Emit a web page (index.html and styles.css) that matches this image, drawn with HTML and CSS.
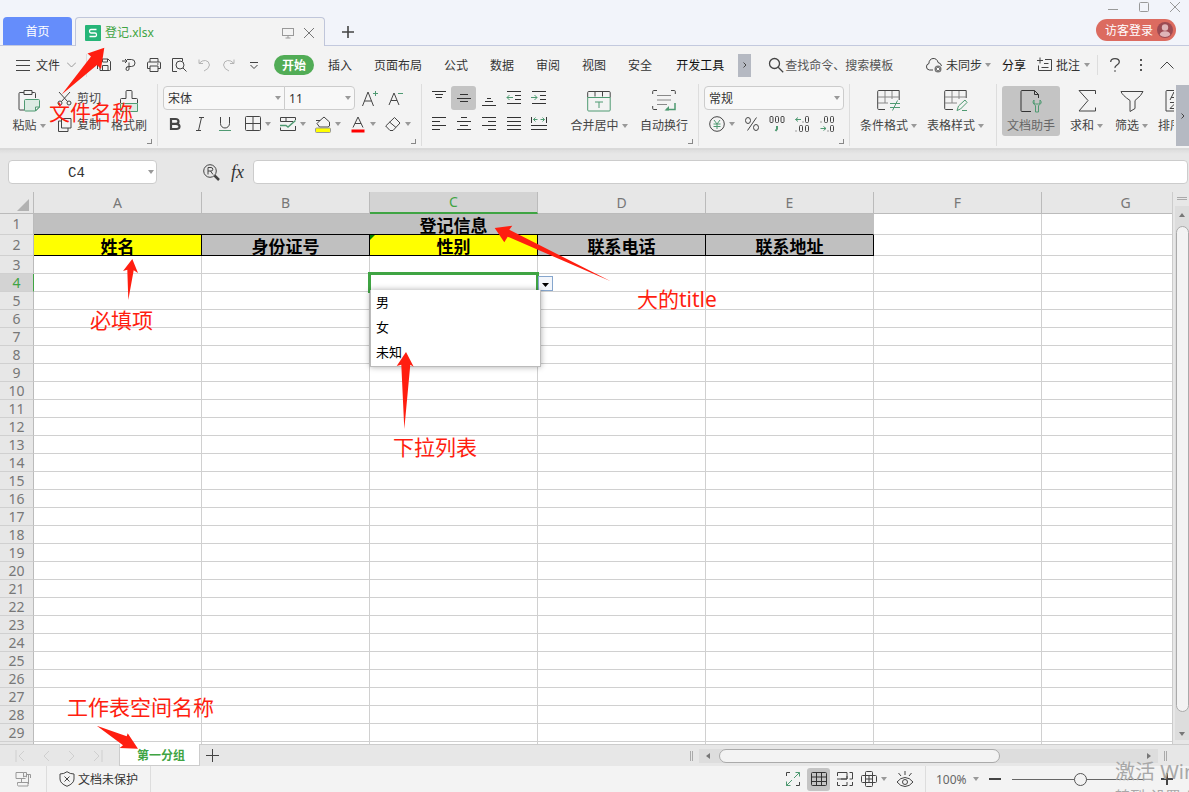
FILE: index.html
```html
<!DOCTYPE html>
<html lang="zh-CN">
<head>
<meta charset="utf-8">
<title>登记.xlsx</title>
<link rel="stylesheet" href="styles.css">
</head>
<body>
<div class="app">
  <header class="titlebar">
    <button class="home-tab">首页</button>
    <div class="file-tab">
      <svg class="file-logo" width="16" height="16" viewBox="0 0 16 16"><rect width="16" height="16" rx="1" fill="#26b578"/><path d="M11.5 4.5H6Q4.500 4.500 4.500 6.200Q4.500 8 6 8h4q1.500 0 1.500 1.800T10 11.500H4.500" fill="none" stroke="#fff" stroke-width="1.300"/></svg>
      <span class="file-name">登记.xlsx</span>
      <button class="plain" aria-label="窗口"><svg width="12" height="12" viewBox="0 0 12 12" class="ic faint"><rect x=".5" y="1.500" width="11" height="7"/><path d="M6 8.500v2.500M3.500 11h5"/></svg></button>
      <button class="plain" aria-label="关闭标签"><svg width="12" height="12" viewBox="0 0 12 12" class="ic mid"><path d="M1 1l10 10M11 1L1 11"/></svg></button>
    </div>
    <button class="plain new-tab" aria-label="新建"><svg width="12" height="12" viewBox="0 0 12 12" class="ic" stroke-width="1.600"><path d="M6 0v12M0 6h12"/></svg></button>
    <div class="window-side">
      <div class="window-controls">
        <button class="plain" aria-label="最小化"><svg width="12" height="12" viewBox="0 0 12 12" class="ic faint"><path d="M1 9.500h10"/></svg></button>
        <button class="plain" aria-label="最大化"><svg width="12" height="12" viewBox="0 0 12 12" class="ic faint"><rect x="1.500" y="2.500" width="9" height="9" rx="1"/></svg></button>
        <button class="plain" aria-label="关闭"><svg width="12" height="12" viewBox="0 0 12 12" class="ic faint"><path d="M1 2l10 10M11 2L1 12"/></svg></button>
      </div>
      <button class="login"><span>访客登录</span><svg width="16" height="16" viewBox="0 0 16 16"><circle cx="8" cy="8" r="8" fill="#9c4a52"/><circle cx="8" cy="5.500" r="3.200" fill="#dfb4b8"/><path d="M2.800 13Q3 9.300 8 9.300T13.200 13Q11 15 8 15T2.800 13" fill="#dfb4b8"/></svg></button>
    </div>
  </header>

  <nav class="menubar">
    <button class="plain file-menu"><svg width="14" height="12" viewBox="0 0 14 12" class="ic"><path d="M0 1.500h14M0 6.500h14M0 11.500h14"/></svg><span>文件</span><svg width="9" height="6" viewBox="0 0 9 6" class="ic faint"><path d="M0 .5l4.500 4.500L9 .5"/></svg></button>
    <div class="quick">
      <button class="plain" aria-label="保存"><svg width="16" height="16" viewBox="0 0 16 16" class="ic"><path d="M1.500 12V3.500q0-1 1-1M4 13.500V3q0-1 1-1h7l2.500 2.500V13q0 .5-1 .5H4M6.500 2v3h5V2M6.500 13.500v-5h5.500v5"/></svg></button>
      <button class="plain" aria-label="输出"><svg width="16" height="16" viewBox="0 0 16 16" class="ic"><path d="M1 4h5M4 2l2 2-2 2M6 2.500h4.500a3.500 3.500 0 0 1 0 7H8l-3 1M8 5.500V12a1.500 1.500 0 0 1-3 0q0-1.500 1.500-2.500"/></svg></button>
      <button class="plain" aria-label="打印"><svg width="16" height="16" viewBox="0 0 16 16" class="ic"><path d="M4 5V1.500h8V5M4 11.500H1.500V6q0-1 1-1h11q1 0 1 1v5.500H12M4 9h8v5.500H4zM11 7h1.500"/></svg></button>
      <button class="plain" aria-label="打印预览"><svg width="16" height="16" viewBox="0 0 16 16" class="ic"><path d="M6 14.500H1.500v-13h10V4"/><circle cx="9" cy="8" r="4"/><path d="M12 11l3.500 3.500"/></svg></button>
      <button class="plain" aria-label="撤销"><svg width="16" height="16" viewBox="0 0 16 16" class="ic pale"><path d="M3 2.500v4h4M3 6.500Q6 3 9.500 3.500T13.500 8Q13 12 8 14"/></svg></button>
      <button class="plain" aria-label="恢复"><svg width="16" height="16" viewBox="0 0 16 16" class="ic pale"><path d="M13 2.500v4H9M13 6.500Q10 3 6.500 3.500T2.500 8Q3 12 8 14"/></svg></button>
      <button class="plain" aria-label="更多"><svg width="16" height="16" viewBox="0 0 16 16" class="ic"><path d="M4 5.500h8M4.500 8L8 11.500 11.500 8"/></svg></button>
    </div>
    <div class="tabs">
      <button class="tab active">开始</button><button class="tab">插入</button><button class="tab">页面布局</button><button class="tab">公式</button><button class="tab">数据</button><button class="tab">审阅</button><button class="tab">视图</button><button class="tab">安全</button><button class="tab dev">开发工具</button>
    </div>
    <button class="plain tab-scroll" aria-label="更多选项卡"><svg width="4" height="6" viewBox="0 0 4 6" class="ic"><path d="M.5 .5L3 3 .5 5.500"/></svg></button>
    <label class="search"><svg width="16" height="16" viewBox="0 0 16 16" class="ic" stroke-width="1.300"><circle cx="6.500" cy="6.500" r="5"/><path d="M10.200 10.200l5 5"/></svg><input type="text" placeholder="查找命令、搜索模板" aria-label="查找命令"></label>
    <div class="menu-right">
      <button class="plain sync"><svg width="18" height="16" viewBox="0 0 18 16" class="ic"><path d="M8 13H4.500A3.300 3.300 0 0 1 4 6.500 4.500 4.500 0 0 1 13 5.500q3 .5 3.500 3.500"/><circle cx="13" cy="12" r="3.500" fill="#777" stroke="none"/><path d="M11.700 10.700l2.600 2.600M14.300 10.700l-2.600 2.600" stroke="#fff"/></svg><span>未同步</span><i class="caret"></i></button>
      <button class="plain share"><span>分享</span></button>
      <button class="plain note"><svg width="16" height="16" viewBox="0 0 16 16" class="ic"><path d="M0 3.500h6M3 .5v6M8 2.500h6.500v11h-13V8.500M7 6.500h4.500M4.500 10.500h7"/></svg><span>批注</span><i class="caret"></i></button>
      <button class="plain help" aria-label="帮助"><svg width="10" height="14" viewBox="0 0 10 14" class="ic" stroke-width="1.300"><path d="M.7 4Q.7.700 5 .7T9.300 4Q9.300 5.500 7 7T5 10M5 12.200v1.500"/></svg></button>
      <button class="plain more" aria-label="菜单"><svg width="4" height="14" viewBox="0 0 4 14" fill="#555"><rect x="1" y="1" width="2" height="2"/><rect x="1" y="6" width="2" height="2"/><rect x="1" y="11" width="2" height="2"/></svg></button>
      <button class="plain" aria-label="折叠功能区"><svg width="14" height="8" viewBox="0 0 14 8" class="ic"><path d="M.5 7.500L7 1l6.500 6.500"/></svg></button>
    </div>
  </nav>

  <div class="ribbon">
    <section class="group g-clip">
      <button class="big paste"><svg width="24" height="24" viewBox="0 0 24 24" class="ic"><path d="M7 3.500H3q-1 0-1 1V20q0 1 1 1h4M15 3.500h2.500q1 0 1 1V9M7 1.500h8v4H7z"/><path class="g" d="M8.500 10.500h13q1 0 1 1V18l-4 4h-10q-1 0-1-1v-9.500q0-1 1-1M22.500 18h-4v4z" fill="#dcebe3"/></svg><span>粘贴<i class="caret"></i></span></button>
      <div class="small-col">
        <button class="plain"><svg width="15" height="15" viewBox="0 0 15 15" class="ic"><path d="M2 1l8.500 9.500M13 1L4.500 10.500"/><circle cx="3" cy="12" r="2"/><circle cx="12" cy="12" r="2"/></svg><span>剪切</span></button>
        <button class="plain"><svg width="15" height="15" viewBox="0 0 15 15" class="ic"><path d="M4 4H1.500v10.500H11V11M4.500 1.500h9.500V11H4.500z"/></svg><span>复制</span></button>
      </div>
      <button class="big painter"><svg width="24" height="24" viewBox="0 0 24 24" class="ic"><path d="M3.500 14v-3.500q0-1 1-1H9V2.500q0-1 1-1h4q1 0 1 1v7h4.500q1 0 1 1V14"/><path class="g" d="M3.500 14.500h17v8h-17z" fill="#dcebe3"/></svg><span>格式刷</span></button>
      <i class="launch"></i>
    </section>

    <section class="group g-font">
      <div class="rows">
        <div class="row"><div class="combo font"><select aria-label="字体"><option>宋体</option></select><i class="caret"></i></div><div class="combo size"><select aria-label="字号"><option>11</option></select><i class="caret"></i></div>
          <button class="plain fs" aria-label="增大字号"><svg width="18" height="18" viewBox="0 0 18 18" class="ic"><path d="M1.500 17L7 3l5.500 14M3.500 12h7"/><path class="g" d="M12 4.500h5M14.500 2v5"/></svg></button>
          <button class="plain fs" aria-label="减小字号"><svg width="18" height="18" viewBox="0 0 18 18" class="ic"><path d="M2 16L7 4l5 12M4 11.500h6"/><path class="g" d="M11 4.500h5"/></svg></button></div>
        <div class="row font-tools">
          <button class="plain" aria-label="加粗"><svg width="16" height="16" viewBox="0 0 16 16" class="ic" stroke-width="2.200"><path d="M4 3h4.500q3 0 3 2.400T8.500 7.800H4zM4 7.800h5q3.500 0 3.500 2.700T9 13H4z"/></svg></button>
          <button class="plain" aria-label="倾斜"><svg width="16" height="16" viewBox="0 0 16 16" class="ic"><path d="M7 1.500h5M4 14.500h5M9.500 1.500l-3 13"/></svg></button>
          <button class="plain" aria-label="下划线"><svg width="16" height="16" viewBox="0 0 16 16" class="ic"><path d="M3.500 1v6.500a4.500 4.500 0 0 0 9 0V1"/><path class="g" d="M2 14.500h12"/></svg></button>
          <button class="plain drop edges" aria-label="边框"><svg width="16" height="16" viewBox="0 0 16 16" class="ic"><rect x=".5" y=".5" width="15" height="14" rx="1"/><path d="M8 .5v14M.5 7.500h15"/></svg><i class="caret"></i></button>
          <button class="plain drop" aria-label="绘制边框"><svg width="16" height="16" viewBox="0 0 16 16" class="ic"><path d="M15.500 4V1.500H.5V5.500H13M6 1.500v4M.5 11.500v3h15V10"/><path class="g" d="M0 9.500h6l2 1.500 7.500-6.500" stroke-width="1.500"/></svg><i class="caret"></i></button>
          <button class="plain drop" aria-label="填充颜色"><svg width="16" height="17" viewBox="0 0 16 17" class="ic"><path d="M1 4.500h4L9 1l5.500 5V10l-1.500 1H4.500L2 7.500l3-3"/><rect x=".5" y="12" width="15" height="4.500" rx="1" fill="#ff0" stroke="#999"/></svg><i class="caret"></i></button>
          <button class="plain drop" aria-label="字体颜色"><svg width="16" height="17" viewBox="0 0 16 17" class="ic"><path d="M3 11.500L8 1l5 10.500M5 7.500h6"/><path d="M1.500 15h13" stroke="#f00" stroke-width="3"/></svg><i class="caret"></i></button>
          <button class="plain drop" aria-label="清除"><svg width="16" height="16" viewBox="0 0 16 16" class="ic"><path d="M9.500 1.500l5.500 5.500L8 14.500H5L.7 10zM4.500 6l6.500 5.500"/></svg><i class="caret"></i></button>
        </div>
      </div>
      <i class="launch"></i>
    </section>

    <section class="group g-align">
      <div class="align-grid">
        <button class="plain" aria-label="顶端对齐"><svg width="16" height="16" viewBox="0 0 16 16" class="ic bars"><path d="M1 1.500h14M4 4.500h8M5 7.500h6"/></svg></button>
        <button class="plain on" aria-label="垂直居中"><svg width="16" height="16" viewBox="0 0 16 16" class="ic bars"><path d="M4 4.500h8M1 8.500h14M4 11.500h8"/></svg></button>
        <button class="plain" aria-label="底端对齐"><svg width="16" height="16" viewBox="0 0 16 16" class="ic bars"><path d="M6 8.500h4M4 11.500h8M1 15.500h14"/></svg></button>
        <button class="plain" aria-label="减少缩进"><svg width="16" height="16" viewBox="0 0 16 16" class="ic bars"><path d="M1 1.500h14M9 5.500h6M9 9.500h6M1 13.500h14"/><path class="g" d="M7 7.500H1M3.500 5L1 7.500 3.500 10"/></svg></button>
        <button class="plain" aria-label="增加缩进"><svg width="16" height="16" viewBox="0 0 16 16" class="ic bars"><path d="M1 1.500h14M9 5.500h6M9 9.500h6M1 13.500h14"/><path class="g" d="M0 7.500h6M3.500 5L6 7.500 3.500 10"/></svg></button>
        <button class="plain" aria-label="左对齐"><svg width="16" height="16" viewBox="0 0 16 16" class="ic bars"><path d="M1 1.500h14M1 5.500h8M1 9.500h14M1 13.500h8"/></svg></button>
        <button class="plain" aria-label="居中"><svg width="16" height="16" viewBox="0 0 16 16" class="ic bars"><path d="M5 1.500h6M1 5.500h14M4 9.500h8M1 13.500h14"/></svg></button>
        <button class="plain" aria-label="右对齐"><svg width="16" height="16" viewBox="0 0 16 16" class="ic bars"><path d="M1 1.500h14M7 5.500h8M1 9.500h14M7 13.500h8"/></svg></button>
        <button class="plain" aria-label="两端对齐"><svg width="16" height="16" viewBox="0 0 16 16" class="ic bars"><path d="M1 1.500h14M1 5.500h14M1 9.500h14M1 13.500h14"/></svg></button>
        <button class="plain" aria-label="分散对齐"><svg width="16" height="16" viewBox="0 0 16 16" class="ic bars"><path d="M.5 1v6M15.500 1v6M0 9.500h16M0 13.500h16"/><path class="g" d="M2.500 3.500h4M9.500 3.500h4M4.500 1.500l-2 2 2 2M11.500 1.500l2 2-2 2"/></svg></button>
      </div>
      <button class="big merge"><svg width="24" height="24" viewBox="0 0 24 24" class="ic"><path d="M.7 8.500v-5q0-1 1-1h20.500q1 0 1 1v5M8 2.500v5M15.500 2.500v5"/><path class="g" d="M.7 8.500h22.500V21q0 1-1 1H1.700q-1 0-1-1zM8 13h8M12 13v6"/></svg><span>合并居中<i class="caret"></i></span></button>
      <button class="big wrap"><svg width="24" height="24" viewBox="0 0 24 24" class="ic"><path d="M.7 5V2.500q0-1 1-1H5M19 1.500h3.300q1 0 1 1V5M.7 17v2.500q0 1 1 1H5"/><path d="M5 6.500h14M5 11h14M5 15.500h10" stroke="#888"/><path class="g" d="M23 14v6.500H14" stroke-width="1.500"/><path d="M17 17l-4.500 4.500H17z" fill="#4f9a72" stroke="none"/></svg><span>自动换行</span></button>
      <i class="launch"></i>
    </section>

    <section class="group g-num">
      <div class="rows">
        <div class="row"><div class="combo numfmt"><select aria-label="数字格式"><option>常规</option></select><i class="caret"></i></div></div>
        <div class="row num-tools">
          <button class="plain drop" aria-label="货币"><svg width="16" height="16" viewBox="0 0 16 16" class="ic"><circle cx="8" cy="8" r="7.300"/><path class="g" d="M5 4l3 4 3-4M8 8v5M4.500 8h7M4.500 10.500h7"/></svg><i class="caret"></i></button>
          <button class="plain" aria-label="百分比"><svg width="16" height="16" viewBox="0 0 16 16" class="ic"><ellipse cx="4" cy="4.500" rx="2.500" ry="3"/><ellipse cx="12" cy="11.500" rx="2.500" ry="3"/><path d="M12.500 1.500l-9 13"/></svg></button>
          <button class="plain" aria-label="千位分隔"><svg width="16" height="18" viewBox="0 0 16 18" class="ic"><rect x="1" y="1.500" width="3" height="6" rx="1"/><rect x="6.500" y="1.500" width="3" height="6" rx="1"/><rect x="12" y="1.500" width="3" height="6" rx="1"/><path class="g" d="M8 11v3l-1.500 2" stroke-width="2"/></svg></button>
          <button class="plain" aria-label="增加小数位"><svg width="16" height="18" viewBox="0 0 16 18" class="ic"><path class="g" d="M7 4.500H1.500M4 2.500l-2.500 2 2.500 2"/><path d="M9 6.500v1M2 15.500v1"/><rect x="11.500" y="1.500" width="3" height="6" rx="1"/><rect x="5.500" y="10.500" width="3" height="6" rx="1"/><rect x="11.500" y="10.500" width="3" height="6" rx="1"/></svg></button>
          <button class="plain" aria-label="减少小数位"><svg width="16" height="18" viewBox="0 0 16 18" class="ic"><path class="g" d="M1.500 13.500H7M4.500 11.500l2.500 2-2.500 2"/><path d="M2 6.500v1M9 15.500v1"/><rect x="5.500" y="1.500" width="3" height="6" rx="1"/><rect x="11.500" y="1.500" width="3" height="6" rx="1"/><rect x="11.500" y="10.500" width="3" height="6" rx="1"/></svg></button>
        </div>
      </div>
      <i class="launch"></i>
    </section>

    <section class="group g-style">
      <button class="big"><svg width="24" height="24" viewBox="0 0 24 24" class="ic"><path d="M8 20.500H1.700q-1 0-1-1v-17q0-1 1-1h20.500V11"/><path d="M1 8h21M1 14h10M8 2v12M15 2v8" stroke="#888"/><path class="g" d="M13 14.500h10M13 18.500h10M20.500 11.500l-5 10"/></svg><span>条件格式<i class="caret"></i></span></button>
      <button class="big"><svg width="24" height="24" viewBox="0 0 24 24" class="ic"><path d="M9 20.500H1.700q-1 0-1-1v-17q0-1 1-1h20.500V9"/><path d="M1 8h21M1 14h12M8 2v12M15 2v8" stroke="#888"/><path class="g" d="M13 21.500l1.500-4.500 6.500-6 2 2.500-6.500 6.500zM18 21.500h5"/></svg><span>表格样式<i class="caret"></i></span></button>
    </section>

    <section class="group g-tools">
      <button class="big helper on"><svg width="24" height="24" viewBox="0 0 24 24" class="ic bars"><path d="M12 22.500H3q-1 0-1-1v-19q0-1 1-1h12.500l4 4V9M15.500 1.500v4h4"/><path class="g" d="M15 11q-2.500 3 1.500 5.500V23h3v-6.500Q24 14 21 11v3l-1.500 1h-3L15 14z"/></svg><span>文档助手</span></button>
      <button class="big narrow"><svg width="24" height="24" viewBox="0 0 24 24" class="ic"><path d="M20.500 5V1.500H4l9 10-9 10.500h16.500V18.500"/></svg><span>求和<i class="caret"></i></span></button>
      <button class="big narrow"><svg width="24" height="24" viewBox="0 0 24 24" class="ic"><path d="M1 2.500h22Q22 6 15 11.500v8L10 22.500v-11Q2 6 1 2.500z"/></svg><span>筛选<i class="caret"></i></span></button>
      <button class="big sort"><svg width="24" height="24" viewBox="0 0 24 24" class="ic"><path d="M14 1.500H4q-1 0-1 1V22h11M7 11l4-8 3 8M8 8.500h5M7 13.500h6l-6 6h6"/></svg><span>排序<i class="caret"></i></span></button>
    </section>
    <button class="plain ribbon-scroll" aria-label="向右滚动"><svg width="4" height="6" viewBox="0 0 4 6" class="ic"><path d="M.5 .5L3 3 .5 5.500"/></svg></button>
  </div>

  <div class="formula">
    <div class="namebox"><input type="text" value="C4" aria-label="名称框"><i class="caret"></i></div>
    <button class="plain" aria-label="浏览"><svg width="17" height="17" viewBox="0 0 17 17" class="ic"><circle cx="7" cy="7" r="6.300"/><path d="M5 10.500v-7h3q1.800 0 1.800 1.800T8 7H5M7.500 7l2.500 3.500"/><path d="M11.500 11.500l4.500 4.500" stroke-width="2.500"/></svg></button>
    <button class="plain fx">fx</button>
    <input class="formula-input" type="text" aria-label="编辑栏">
  </div>

  <main class="sheet">
    <div class="grid-view">
      <table class="grid">
        <colgroup><col class="c-head"><col><col><col><col><col><col><col></colgroup>
        <thead><tr><th class="corner"><svg width="12" height="12" viewBox="0 0 12 12"><path d="M12 0v12H0z" fill="#b2b2b2"/></svg></th><th>A</th><th>B</th><th class="sel">C</th><th>D</th><th>E</th><th>F</th><th>G</th></tr></thead>
        <tbody>
          <tr class="tall"><th>1</th><td class="title" colspan="5">登记信息</td><td></td><td></td></tr>
          <tr class="tall"><th>2</th><td class="field must">姓名</td><td class="field">身份证号</td><td class="field must flag">性别</td><td class="field">联系电话</td><td class="field">联系地址</td><td></td><td></td></tr>
          <tr><th>3</th><td></td><td></td><td></td><td></td><td></td><td></td><td></td></tr>
          <tr><th class="sel">4</th><td></td><td></td><td class="current">
            <div class="cursor"></div>
            <button class="dv-button" aria-label="展开列表"><svg width="7" height="4" viewBox="0 0 7 4"><path d="M0 0h7L3.500 4z"/></svg></button>
            <ul class="dv-list"><li>男</li><li>女</li><li>未知</li></ul>
          </td><td></td><td></td><td></td><td></td></tr>
          <tr><th>5</th><td></td><td></td><td></td><td></td><td></td><td></td><td></td></tr>
          <tr><th>6</th><td></td><td></td><td></td><td></td><td></td><td></td><td></td></tr>
          <tr><th>7</th><td></td><td></td><td></td><td></td><td></td><td></td><td></td></tr>
          <tr><th>8</th><td></td><td></td><td></td><td></td><td></td><td></td><td></td></tr>
          <tr><th>9</th><td></td><td></td><td></td><td></td><td></td><td></td><td></td></tr>
          <tr><th>10</th><td></td><td></td><td></td><td></td><td></td><td></td><td></td></tr>
          <tr><th>11</th><td></td><td></td><td></td><td></td><td></td><td></td><td></td></tr>
          <tr><th>12</th><td></td><td></td><td></td><td></td><td></td><td></td><td></td></tr>
          <tr><th>13</th><td></td><td></td><td></td><td></td><td></td><td></td><td></td></tr>
          <tr><th>14</th><td></td><td></td><td></td><td></td><td></td><td></td><td></td></tr>
          <tr><th>15</th><td></td><td></td><td></td><td></td><td></td><td></td><td></td></tr>
          <tr><th>16</th><td></td><td></td><td></td><td></td><td></td><td></td><td></td></tr>
          <tr><th>17</th><td></td><td></td><td></td><td></td><td></td><td></td><td></td></tr>
          <tr><th>18</th><td></td><td></td><td></td><td></td><td></td><td></td><td></td></tr>
          <tr><th>19</th><td></td><td></td><td></td><td></td><td></td><td></td><td></td></tr>
          <tr><th>20</th><td></td><td></td><td></td><td></td><td></td><td></td><td></td></tr>
          <tr><th>21</th><td></td><td></td><td></td><td></td><td></td><td></td><td></td></tr>
          <tr><th>22</th><td></td><td></td><td></td><td></td><td></td><td></td><td></td></tr>
          <tr><th>23</th><td></td><td></td><td></td><td></td><td></td><td></td><td></td></tr>
          <tr><th>24</th><td></td><td></td><td></td><td></td><td></td><td></td><td></td></tr>
          <tr><th>25</th><td></td><td></td><td></td><td></td><td></td><td></td><td></td></tr>
          <tr><th>26</th><td></td><td></td><td></td><td></td><td></td><td></td><td></td></tr>
          <tr><th>27</th><td></td><td></td><td></td><td></td><td></td><td></td><td></td></tr>
          <tr><th>28</th><td></td><td></td><td></td><td></td><td></td><td></td><td></td></tr>
          <tr><th>29</th><td></td><td></td><td></td><td></td><td></td><td></td><td></td></tr>
          <tr><th></th><td></td><td></td><td></td><td></td><td></td><td></td><td></td></tr>
        </tbody>
      </table>
    </div>
    <div class="vscroll">
      <i class="split-h"></i>
      <div class="vtrack"><i class="arrow up"></i><div class="vthumb"></div><i class="arrow down"></i></div>
    </div>
  </main>

  <div class="sheetbar">
    <div class="sheet-nav">
      <button class="plain" aria-label="第一个"><svg width="10" height="12" viewBox="0 0 10 12" class="ic ghost"><path d="M1 0v12M9 1L4 6l5 5"/></svg></button>
      <button class="plain" aria-label="上一个"><svg width="10" height="12" viewBox="0 0 10 12" class="ic ghost"><path d="M8 1L3 6l5 5"/></svg></button>
      <button class="plain" aria-label="下一个"><svg width="10" height="12" viewBox="0 0 10 12" class="ic ghost"><path d="M2 1l5 5-5 5"/></svg></button>
      <button class="plain" aria-label="最后一个"><svg width="10" height="12" viewBox="0 0 10 12" class="ic ghost"><path d="M9 0v12M1 1l5 5-5 5"/></svg></button>
    </div>
    <button class="sheet-tab">第一分组</button>
    <button class="plain add-sheet" aria-label="新建工作表"><svg width="13" height="13" viewBox="0 0 13 13" class="ic"><path d="M6.500 0v13M0 6.500h13"/></svg></button>
    <div class="hscroll"><i class="split-v"></i><div class="htrack"><i class="arrow left"></i><div class="hthumb"></div><i class="arrow right"></i></div><i class="split-v"></i></div>
  </div>

  <footer class="status">
    <button class="plain st-doc" aria-label="书写"><svg width="17" height="16" viewBox="0 0 17 16" class="ic faint"><path d="M8.500 1.500H1v6h9.500M8.500 1.500v4.500l1.500-1 1.500 1V1.500h-3M11.500 3.500h4V7M13.500 4v9M13 13.500v1.500H3.500q-1 0-1-1.500V11.500h10.500zM6.500 7.500v4"/></svg></button>
    <button class="plain st-protect"><svg width="16" height="16" viewBox="0 0 16 16" class="ic"><path d="M8 .7Q11 3 15 3v5q0 4.500-7 7.300Q1 12.500 1 8V3q4 0 7-2.300zM5.500 5.500l5 5M10.500 5.500l-5 5"/></svg><span>文档未保护</span></button>
    <div class="views">
      <button class="plain" aria-label="全屏"><svg width="16" height="16" viewBox="0 0 16 16" class="ic"><path d="M1.500 5V1.500H5M1.500 11v3.500M11 14.500h3.500V11"/><path class="g" d="M9 7l5.500-5.500M10.500 1.500h4v4M7 9l-5.500 5.500M1.500 10.500v4h4"/></svg></button>
      <button class="plain on" aria-label="普通视图"><svg width="16" height="16" viewBox="0 0 16 16" class="ic bars"><rect x=".5" y="1.500" width="15" height="13" rx="1"/><path d="M5.500 1.500v13M10.500 1.500v13M.5 6h15M.5 10.500h15"/></svg></button>
      <button class="plain" aria-label="分页预览"><svg width="16" height="16" viewBox="0 0 16 16" class="ic"><path d="M.5 5V1.500h9.500V8H0M4 8h6V5M12.500 1.500h3V8h-3M.5 11v3.500H3M5 14.500h5V11M12.500 14.500h3V11"/></svg></button>
      <button class="plain drop" aria-label="阅读模式"><svg width="16" height="16" viewBox="0 0 16 16" class="ic"><rect x="4.500" y=".5" width="7" height="15" rx="1"/><rect x=".5" y="4.500" width="15" height="7" rx="1"/><path d="M8 4.500v7M4.500 8h7"/></svg><i class="caret"></i></button>
      <button class="plain eye" aria-label="护眼模式"><svg width="18" height="18" viewBox="0 0 18 18" class="ic"><path d="M1 12q3.500-4.500 8-4.500t8 4.500q-3.500 4.500-8 4.500T1 12zM9 1v4M2.500 3l2.500 3M15.500 3L13 6"/><circle cx="9" cy="12" r="2.500"/></svg></button>
    </div>
    <div class="zoom">
      <button class="plain zoom-value"><span>100%</span><i class="caret"></i></button>
      <button class="plain" aria-label="缩小"><svg width="12" height="12" viewBox="0 0 12 12" class="ic" stroke-width="2"><path d="M0 6h12"/></svg></button>
      <input type="range" min="0" max="100" value="50" aria-label="缩放">
      <button class="plain" aria-label="放大"><svg width="12" height="12" viewBox="0 0 12 12" class="ic" stroke-width="2"><path d="M0 6h12M6 0v12"/></svg></button>
    </div>
  </footer>

  <div class="overlay">
    <p class="mark m-win">激活 Windows</p>
    <p class="mark m-sub">转到“设置”以激活</p>
    <svg class="arrows" width="1189" height="792" viewBox="0 0 1189 792" fill="#ff1e10">
      <path d="M104.300 47.700L87.500 53.500l3.500 3L61.700 94.500 97 65l4 4z"/>
      <path d="M132.300 259L123 271l4.300-1.300 1 30.300 5.400-29.700L138 273z"/>
      <path d="M494.700 228l17.600-2.300-3 4L610.700 281.300 507.700 236.700l-3.400 5.600z"/>
      <path d="M406 352l-9.300 14 4.600-1.300 3 64.300 6-64.300 3.400 2z"/>
      <path d="M138 748.700L127.700 733.300l-1 3L96.700 725.700 123 745.300l-3.300 2.700z"/>
    </svg>
    <p class="remark r-file">文件名称</p>
    <p class="remark r-must">必填项</p>
    <p class="remark r-title">大的title</p>
    <p class="remark r-list">下拉列表</p>
    <p class="remark r-sheet">工作表空间名称</p>
  </div>
</div>
</body>
</html>
```

FILE: styles.css
```css
* { box-sizing: border-box; }
body {
  margin: 0;
  font: 12px/16px "Noto Sans", "Noto Sans CJK SC", sans-serif;
  color: #333;
}
button, input, select { font: inherit; color: inherit; margin: 0; }
button { border: 0; padding: 0; background: none; white-space: nowrap; }
svg { display: block; flex: none; }
p, ul { margin: 0; padding: 0; }
.app {
  position: relative;
  height: 100vh;
  overflow: hidden;
  display: flex;
  flex-direction: column;
  background: #f3f3f3;
}
.ic { fill: none; stroke: #444; }
.ic.mid { stroke: #777; }
.ic.faint { stroke: #999; }
.ic.pale { stroke: #b4b4b4; }
.ic.ghost { stroke: #cfcfcf; }
.ic.bars { stroke: #333; }
.ic .g { stroke: #4f9a72; }
.plain { display: flex; align-items: center; justify-content: center; flex: none; }
.plain span, .login span { padding-top: 2px; }
.caret {
  display: block;
  flex: none;
  border: 3px solid transparent;
  border-top: 4px solid #999;
  border-bottom: 0;
}
.on { background: #c4c4c4; border-radius: 3px; }

/* Title bar */
.titlebar {
  flex: none;
  height: 46px;
  display: flex;
  align-items: flex-end;
  background: #f2f4fa;
  border-bottom: 1px solid #c3c9de;
}
.home-tab {
  width: 69px;
  height: 28px;
  margin-left: 3px;
  padding-top: 2px;
  background: #658dfb;
  color: #fff;
  border-radius: 4px 4px 0 0;
}
.file-tab {
  width: 250px;
  height: 29px;
  margin: 0 0 -1px 3px;
  padding: 2px 9px 0 9px;
  display: flex;
  align-items: center;
  gap: 9px;
  background: #f3f3f3;
  border: 1px solid #c0c6da;
  border-bottom: 0;
  border-radius: 4px 4px 0 0;
}
.file-name { flex: 1; margin-left: -5px; color: #3fa443; }
.new-tab { width: 46px; height: 28px; padding-top: 2px; }
.window-side { margin-left: auto; align-self: stretch; display: flex; flex-direction: column; align-items: flex-end; }
.window-controls { display: flex; gap: 19px; height: 19px; align-items: flex-start; padding-right: 8px; }
.login {
  width: 80px;
  height: 22px;
  margin-right: 13px;
  display: flex;
  align-items: center;
  justify-content: space-between;
  padding: 0 3px 0 9px;
  border-radius: 11px;
  background: #dc6b60;
  color: #fff;
}

/* Menu bar */
.menubar { flex: none; height: 38px; display: flex; align-items: center; }
.file-menu { width: 70px; margin-left: 16px; gap: 7px; justify-content: flex-start; }
.file-menu span { width: 24px; margin-left: -1px; }
.quick { display: flex; align-items: center; gap: 9px; height: 23px; padding-left: 9px; width: 184px; border-left: 1px solid #ddd; }
.tabs { display: flex; align-items: center; margin-left: 4px; }
.tab { padding: 2px 11px 0; height: 20px; line-height: 18px; }
.tab.active { padding: 2px 8px 0; margin-right: 3px; border-radius: 10px; background: #51ac56; color: #fff; font-weight: bold; }
.tab.dev { margin-left: 2px; color: #111; }
.tab-scroll { width: 13px; height: 23px; margin-left: 3px; background: #b5b9c2; }
.search { display: flex; align-items: center; margin-left: 17px; }
.search input { width: 120px; border: 0; padding: 1px 0 0 1px; background: none; outline: 0; }
.search input::placeholder { color: #555; opacity: 1; }
.menu-right { margin-left: auto; padding-right: 15px; display: flex; align-items: center; }
.sync, .note { gap: 3px; }
.share { margin: 0 11px; color: #111; }
.note .caret { margin-left: 1px; }
.help { height: 20px; width: 34px; margin-left: 7px; border-left: 1px solid #ddd; }
.more { width: 20px; margin-right: 9px; }

/* Ribbon */
.ribbon {
  flex: none;
  position: relative;
  height: 66px;
  display: flex;
  overflow: hidden;
  border-bottom: 2px solid #d9d9d9;
}
.group {
  position: relative;
  flex: none;
  height: 62px;
  display: flex;
  align-items: flex-start;
  padding-top: 2px;
  border-right: 1px solid #ddd;
}
.launch {
  position: absolute;
  right: 5px;
  bottom: 2px;
  width: 5px;
  height: 5px;
  border: solid #888;
  border-width: 0 1px 1px 0;
}
.big {
  flex: none;
  height: 50px;
  display: flex;
  flex-direction: column;
  align-items: center;
  padding-top: 3px;
  gap: 5px;
  color: #444;
}
.big span { display: flex; align-items: center; gap: 3px; }
.g-clip { padding-left: 6px; }
.paste { width: 46px; }
.small-col { display: flex; flex-direction: column; gap: 2px; margin-left: 5px; color: #444; }
.small-col button { height: 24px; gap: 5px; }
.painter { width: 56px; }
.g-font { width: 264px; padding-left: 5px; }
.rows { display: flex; flex-direction: column; gap: 2px; }
.row { display: flex; height: 24px; align-items: center; }
.combo {
  height: 24px;
  display: flex;
  align-items: center;
  padding-right: 3px;
  border: 1px solid #ccc;
  border-radius: 4px;
  background: #f8f8f8;
}
.combo select { flex: 1; min-width: 0; appearance: none; border: 0; background: none; padding: 2px 0 0 4px; height: 20px; outline: 0; }
.combo.font { width: 122px; border-radius: 4px 0 0 4px; }
.combo.size { width: 71px; margin-left: -1px; border-radius: 0 4px 4px 0; }
.combo.numfmt { width: 140px; }
.fs { width: 26px; padding-left: 3px; }
.font-tools { padding-left: 4px; gap: 9px; }
.edges { margin-left: 3px; }
.drop { gap: 4px; }
.g-align { width: 277px; padding-left: 4px; }
.align-grid { display: grid; grid-template-columns: repeat(5, 25px); gap: 2px 0; }
.align-grid button { height: 24px; }
.merge { width: 60px; margin-left: 18px; }
.wrap { width: 66px; margin-left: 2px; }
.g-num { width: 151px; padding-left: 5px; }
.num-tools { padding-left: 5px; gap: 9px; }
.g-style { padding: 2px 8px 0 6px; gap: 2px; }
.g-style .big { width: 65px; }
.g-tools { padding-left: 5px; border: 0; }
.helper { width: 58px; margin-right: 4px; color: #666; }
.narrow { width: 45px; }
.sort { width: 41px; }
.ribbon-scroll {
  position: absolute;
  top: 1px;
  right: 0;
  width: 13px;
  height: 61px;
  background: #b5b9c2;
  box-shadow: -2px 0 #f3f3f3;
}

/* Formula bar */
.formula {
  flex: none;
  height: 42px;
  display: flex;
  align-items: center;
  padding: 2px 1px 0 8px;
  background: linear-gradient(#dedede, #e7e7e7 4px);
}
.namebox {
  width: 149px;
  height: 24px;
  display: flex;
  align-items: center;
  padding-right: 2px;
  margin-right: 46px;
  background: #fff;
  border: 1px solid #ccc;
  border-radius: 4px;
}
.namebox input {
  flex: 1;
  min-width: 0;
  border: 0;
  padding: 2px 4px 0 0;
  background: none;
  outline: 0;
  text-align: center;
  font: 14px "Liberation Mono", monospace;
}
.fx { width: 33px; padding-left: 2px; font: italic 18px "Liberation Serif", serif; }
.formula-input {
  flex: 1;
  height: 24px;
  border: 1px solid #ccc;
  border-radius: 4px;
  background: #fff;
  outline: 0;
}

/* Grid */
.sheet { flex: 1; min-height: 0; display: flex; background: #e7e7e7; }
.grid-view { flex: 1; min-width: 0; overflow: hidden; border-right: 1px solid #ccc; background: #fff; }
.grid { table-layout: fixed; width: 1210px; border-collapse: separate; border-spacing: 0; }
.grid col { width: 168px; }
.grid .c-head { width: 34px; }
.grid tr { height: 18px; }
.grid thead tr { height: 22px; }
.grid .tall { height: 21px; }
.grid th, .grid td {
  padding: 0;
  border: solid #d0d0d0;
  border-width: 0 1px 1px 0;
}
.grid th {
  font-size: 14px;
  line-height: 16px;
  font-weight: normal;
  color: #777;
  background: #e7e7e7;
  border-color: #bbb;
}
.grid tbody th { border-bottom-color: #d0d0d0; }
.grid .corner { padding: 4px 4px 0 17px; }
.grid thead .sel { background: #d3d3d3; color: #3fa443; border-bottom: 2px solid #3fa443; }
.grid tbody .sel { background: #d3d3d3; color: #3fa443; border-right-color: #3fa443; }
.grid .title, .grid .field {
  height: 21px;
  padding-top: 2px;
  background: #c0c0c0;
  border-color: #000;
  color: #000;
  text-align: center;
  font: bold 17px/18px "Noto Sans CJK SC", sans-serif;
}
.grid .title { border-right-color: #c0c0c0; }
.grid .must { background: #ff0; }
.grid .flag { background: linear-gradient(135deg, #008000 3px, #ff0 4px); }
.grid .current { position: relative; }
.cursor { position: absolute; inset: -2px; border: 3px solid #3fa443; }
.dv-button {
  position: absolute;
  left: 168px;
  top: 2px;
  width: 15px;
  height: 15px;
  display: flex;
  align-items: center;
  justify-content: center;
  padding-top: 2px;
  background: #f3f6fb;
  border: 1px solid #86a6cd;
}
.dv-list {
  position: absolute;
  z-index: 1;
  left: 0;
  top: 16px;
  width: 171px;
  padding: 0 0 1px 5px;
  list-style: none;
  font-size: 13px;
  line-height: 25px;
  color: #000;
  background: #fff;
  border: 1px solid #bbb;
  border-top: 0;
  box-shadow: 0 0 6px #0005;
}
.vscroll { flex: none; width: 16px; display: flex; flex-direction: column; align-items: center; padding: 5px 0 4px 2px; }
.split-h { width: 10px; height: 3px; border: solid #aaa; border-width: 1px 0; }
.vtrack { flex: 1; width: 14px; margin-top: 6px; background: #ddd; display: flex; flex-direction: column; align-items: center; padding: 7px 0 4px; }
.vthumb { width: 13px; flex: 0 1 486px; margin: 9px 0 auto; border: 1px solid #aaa; border-radius: 7px; background: #f3f3f3; }
.arrow { display: block; flex: none; border: 3px solid transparent; }
.up { border-top: 0; border-bottom: 4px solid #777; }
.down { border-bottom: 0; border-top: 4px solid #777; }
.left { border-left: 0; border-right: 4px solid #777; }
.right { border-right: 0; border-left: 4px solid #777; }

/* Sheet tabs */
.sheetbar { flex: none; height: 22px; display: flex; align-items: center; background: #e7e7e7; border-top: 1px solid #ccc; }
.sheet-nav { width: 119px; padding-left: 15px; display: flex; gap: 16px; }
.sheet-tab {
  width: 81px;
  height: 22px;
  margin-top: -1px;
  padding: 2px 0 0 3px;
  background: #fff;
  border: 1px solid #ccc;
  border-top: 0;
  color: #3fa443;
  font-weight: bold;
}
.add-sheet { width: 25px; }
.hscroll { margin-left: auto; width: 42%; min-width: 200px; display: flex; align-items: center; gap: 6px; padding-right: 22px; }
.split-v { flex: none; width: 3px; height: 10px; border: solid #aaa; border-width: 0 1px; }
.htrack { flex: 1; height: 14px; display: flex; align-items: center; padding: 0 7px; background: #ddd; }
.hthumb { width: 281px; height: 14px; margin: 0 auto 0 9px; border: 1px solid #aaa; border-radius: 7px; background: #f3f3f3; }

/* Status bar */
.status { flex: none; height: 26px; display: flex; align-items: center; }
.st-doc { width: 47px; height: 26px; border-right: 1px solid #ddd; }
.st-protect { width: 104px; height: 26px; gap: 3px; border-right: 1px solid #ddd; }
.views { margin-left: auto; height: 26px; display: flex; align-items: center; gap: 3px; padding-right: 8px; border-right: 1px solid #ddd; }
.views .plain { min-width: 23px; height: 23px; }
.views .drop { padding: 0 3px 0 2px; }
.views .eye { width: 24px; }
.zoom { width: 263px; display: flex; align-items: center; padding: 0 16px 0 10px; }
.zoom-value { gap: 6px; margin-right: 10px; color: #666; }
.zoom input { flex: 1; min-width: 0; margin: 0 11px; height: 16px; appearance: none; background: linear-gradient(#666, #666) center / 100% 1px no-repeat; }
.zoom input::-webkit-slider-thumb { appearance: none; width: 13px; height: 13px; border: 1px solid #555; border-radius: 50%; background: #f3f3f3; }

/* Remarks drawn over the window */
.overlay { position: absolute; inset: 0; overflow: hidden; pointer-events: none; z-index: 2; }
.arrows { position: absolute; left: 0; top: 0; }
.remark { position: absolute; font-size: 21px; line-height: 24px; color: #ff1e10; white-space: nowrap; }
.r-file { left: 49px; top: 100px; }
.r-must { left: 90px; top: 308px; }
.r-title { left: 637px; top: 287px; }
.r-list { left: 393px; top: 435px; }
.r-sheet { left: 67px; top: 695px; }
.mark { position: absolute; left: 1115px; color: #a8a8a8; white-space: nowrap; }
.m-win { top: 760px; font-size: 20px; line-height: 24px; }
.m-sub { top: 786px; font-size: 15px; line-height: 20px; }
```
